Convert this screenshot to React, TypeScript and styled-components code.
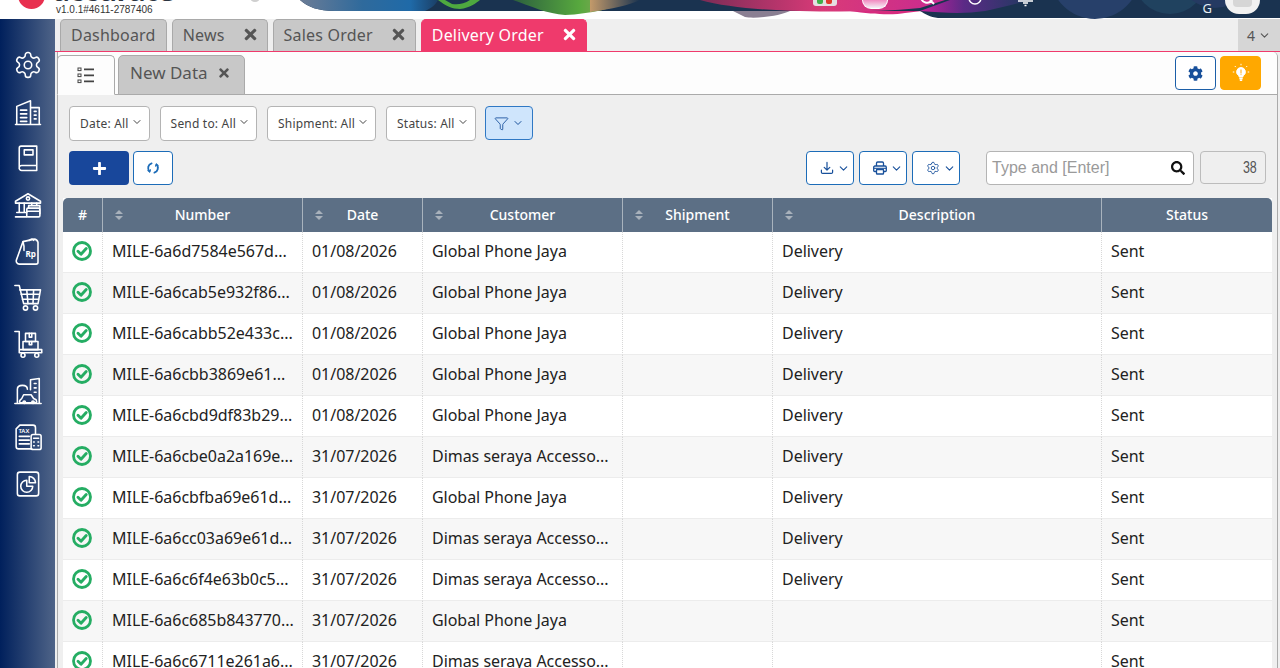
import styled, { createGlobalStyle } from "styled-components";
import { ChevronDown, Funnel, Settings } from "lucide-react";
import { FaCog, FaPlus, FaSearch, FaTimes } from "react-icons/fa";

const GlobalStyle = createGlobalStyle`
  html, body {
    margin: 0;
    height: 100%;
    overflow: hidden;
    background: #efefef;
    font-family: "Noto Sans", "Open Sans", sans-serif;
  }
  * { box-sizing: border-box; }
`;

const Page = styled.div`
  width: 1280px;
  height: 668px;
  overflow: hidden;
  display: flex;
  flex-direction: column;
`;

/* header, only the lower edge of it is on screen */
const Header = styled.header`
  position: relative;
  height: 19px;
  flex: none;
  background: #fff;
  overflow: hidden;
  display: flex;
  align-items: flex-end;
  justify-content: space-between;
`;
const BannerArt = styled.svg`
  position: absolute;
  left: 0;
  top: 0;
`;
const Brand = styled.div`
  position: relative;
  display: flex;
  align-items: flex-end;
  height: 19px;
  padding: 0 0 3px 18px;
`;
const LogoDot = styled.div`
  width: 27px;
  height: 27px;
  border-radius: 50%;
  background: #e8304f;
  flex: none;
  margin: 0 11px 7px 0;
`;
const BrandText = styled.div`
  display: flex;
  flex-direction: column;
`;
const BrandName = styled.div`
  display: flex;
  align-items: flex-end;
  gap: 7px;
  height: 20px;
  margin: 0 0 4px -3px;
`;
const BrandNameText = styled.span`
  font-size: 28px;
  font-weight: 700;
  color: #2b3440;
  line-height: 20px;
`;
const OnlineText = styled.span`
  font-size: 9px;
  font-style: italic;
  color: #666;
  line-height: 8px;
`;
const Version = styled.div`
  font-family: "Liberation Sans", sans-serif;
  font-size: 10px;
  line-height: 12px;
  color: #333;
`;
const StatusDot = styled.div`
  position: absolute;
  left: 250px;
  top: -7px;
  width: 10px;
  height: 9px;
  border-radius: 50%;
  background: #cfcfcf;
`;
const HeaderTools = styled.div`
  position: relative;
  height: 19px;
  display: flex;
  align-items: flex-start;
  padding-right: 20px;
`;
const AppsTile = styled.div`
  width: 24px;
  height: 6px;
  margin-right: 25px;
  border-radius: 0 0 3px 3px;
  background: #e5dfe2;
  display: flex;
  justify-content: center;
  gap: 3px;
`;
const AppsDot = styled.span<{ $c: string }>`
  width: 6px;
  height: 4px;
  border-radius: 0 0 2px 2px;
  background: ${(p) => p.$c};
`;
const Avatar = styled.div`
  width: 26px;
  height: 9px;
  margin-right: 27px;
  border-radius: 0 0 13px 13px;
  background: linear-gradient(#f28ac0, #f4f0f6);
  border: 1.5px solid #fff;
  border-top: none;
`;
const HeadIcons = styled.svg`
  flex: none;
  margin-right: 168px;
`;
const UserLetter = styled.div`
  color: #e8eef5;
  font-size: 13px;
  line-height: 14px;
  margin-right: 13px;
  padding-top: 1px;
`;
const UserBubble = styled.div`
  width: 35px;
  height: 14px;
  border-radius: 0 0 18px 18px;
  background: #f1f1f1;
  display: flex;
  justify-content: center;
`;
const UserBubbleInner = styled.span`
  width: 19px;
  height: 7px;
  background: #d6d6d6;
  border-radius: 0 0 4px 4px;
`;

const Body = styled.div`
  flex: 1;
  min-height: 0;
  display: flex;
`;

const Sidebar = styled.nav`
  width: 55px;
  flex: none;
  background: linear-gradient(90deg, #00205c 0%, #4f6488 100%);
  display: flex;
  flex-direction: column;
  align-items: center;
  padding: 31px 0 0 0;
  gap: 16.5px;
`;
const SideIcon = styled.svg`
  width: 30px;
  height: 30px;
  flex: none;
  fill: none;
  stroke: #fff;
  stroke-width: 1.25;
  stroke-linejoin: round;
  stroke-linecap: round;
`;

const Main = styled.main`
  flex: 1;
  min-width: 0;
  display: flex;
  flex-direction: column;
`;

const TabBar = styled.div`
  height: 33px;
  flex: none;
  display: flex;
  align-items: flex-end;
  gap: 5px;
  padding-left: 5px;
  background: #efefef;
  border-bottom: 1px solid #ef3a6c;
`;
const Tab = styled.div<{ $active?: boolean }>`
  height: 32px;
  display: flex;
  align-items: center;
  gap: 19px;
  padding: 0 10px 2px 10px;
  border: 1px solid ${(p) => (p.$active ? "#ef3a6c" : "#a9a9a9")};
  border-bottom: none;
  border-radius: 5px 5px 0 0;
  background: ${(p) => (p.$active ? "#ef3a6c" : "#c8c8c8")};
  color: ${(p) => (p.$active ? "#fff" : "#555")};
  font-size: 16px;
  letter-spacing: 0.2px;
  white-space: nowrap;
`;
const TabClose = styled(FaTimes)`
  font-size: 17px;
  margin: 0 -2px;
  flex: none;
`;
const TabMore = styled.div`
  margin-left: auto;
  width: 42px;
  height: 32px;
  background: #d6d6d6;
  color: #555;
  font-size: 14px;
  display: flex;
  align-items: center;
  justify-content: center;
  gap: 3px;
`;

const Panel = styled.section`
  flex: 1;
  min-height: 0;
  margin: 0 2px 0 2px;
  border-left: 1px solid #aaa;
  border-right: 1px solid #aaa;
  background: #efefef;
  border-top-right-radius: 5px;
`;
const SubBar = styled.div`
  height: 43px;
  display: flex;
  align-items: flex-end;
  gap: 3px;
  background: #fdfdfd;
  border-bottom: 1px solid #aaa;
  padding-right: 16px;
  border-top-right-radius: 5px;
`;
const SubTab = styled.div<{ $active?: boolean }>`
  height: 40px;
  margin-bottom: -1px;
  margin-left: ${(p) => (p.$active ? "-1px" : "0")};
  display: flex;
  align-items: center;
  justify-content: center;
  gap: 9px;
  padding: ${(p) => (p.$active ? "0" : "0 13px 5px 11px")};
  width: ${(p) => (p.$active ? "58px" : "auto")};
  border: 1px solid #aaa;
  border-bottom: ${(p) => (p.$active ? "1px solid #fdfdfd" : "1px solid #aaa")};
  border-radius: 5px 5px 0 0;
  background: ${(p) => (p.$active ? "#fdfdfd" : "#c8c8c8")};
  color: #555;
  font-size: 17px;
  white-space: nowrap;
`;
const SubActions = styled.div`
  margin-left: auto;
  align-self: flex-start;
  padding-top: 4px;
  display: flex;
  gap: 4px;
`;
const ActionButton = styled.button<{ $amber?: boolean }>`
  width: 41px;
  height: 34px;
  padding: 0;
  display: flex;
  align-items: center;
  justify-content: center;
  border-radius: 4px;
  border: 1px solid ${(p) => (p.$amber ? "#ffa800" : "#1c5fa8")};
  background: ${(p) => (p.$amber ? "#ffa800" : "#fff")};
  color: ${(p) => (p.$amber ? "#fff" : "#18509b")};
  font-size: 15px;
`;

const Content = styled.div`
  padding: 11px 5px 0 5px;
`;
const FilterRow = styled.div`
  display: flex;
  align-items: flex-start;
  gap: 10px;
  margin: 0 0 10px 6px;
`;
const FilterButton = styled.button`
  height: 35px;
  padding: 0 6px 0 10px;
  display: flex;
  align-items: center;
  gap: 2px;
  background: #fff;
  border: 1px solid #b4b4b4;
  border-radius: 4px;
  color: #444;
  font: 12px "Noto Sans", sans-serif;
  letter-spacing: 0.2px;
  white-space: nowrap;
`;
const FilterChevron = styled(ChevronDown)`
  margin-top: -3px;
`;
const FunnelButton = styled.button`
  width: 48px;
  height: 34px;
  padding: 0;
  margin-left: -1px;
  display: flex;
  align-items: center;
  justify-content: center;
  gap: 3px;
  background: #cfe5fc;
  border: 1px solid #2f78c4;
  border-radius: 4px;
  color: #18509b;
`;
const ToolRow = styled.div`
  display: flex;
  align-items: flex-start;
  margin: 0 6px 13px 6px;
`;
const AddButton = styled.button`
  width: 60px;
  height: 34px;
  padding: 0;
  display: flex;
  align-items: center;
  justify-content: center;
  background: #18479b;
  border: none;
  border-radius: 4px;
  color: #fff;
  font-size: 15px;
`;
const RefreshButton = styled.button`
  width: 40px;
  height: 34px;
  padding: 0;
  margin-left: 4px;
  display: flex;
  align-items: center;
  justify-content: center;
  background: #fff;
  border: 1px solid #1c6cb8;
  border-radius: 4px;
`;
const ToolGroup = styled.div`
  margin-left: auto;
  display: flex;
  gap: 5px;
`;
const ToolButton = styled.button`
  width: 48px;
  height: 34px;
  padding: 0 0 0 13px;
  display: flex;
  align-items: center;
  justify-content: flex-start;
  gap: 3px;
  background: #fff;
  border: 1px solid #1c6cb8;
  border-radius: 4px;
  color: #18509b;
`;
const SearchBox = styled.div`
  width: 208px;
  height: 34px;
  margin-left: 26px;
  padding: 0 8px 0 5px;
  display: flex;
  align-items: center;
  justify-content: space-between;
  background: #fff;
  border: 1px solid #b4b4b4;
  border-radius: 4px;
  color: #111;
  font-size: 14px;
`;
const SearchHint = styled.span`
  font: 16px "Liberation Sans", sans-serif;
  color: #9a9a9a;
`;
const CountBox = styled.div`
  width: 66px;
  height: 33px;
  margin-left: 6px;
  padding-right: 8px;
  display: flex;
  align-items: center;
  justify-content: flex-end;
  background: #efefef;
  border: 1px solid #bcbcbc;
  border-radius: 4px;
  color: #555;
  font: 16px "Liberation Sans", sans-serif;
`;
const CountValue = styled.span`
  display: inline-block;
  transform: scaleX(0.78);
  transform-origin: right center;
`;

const Table = styled.table`
  width: 1209px;
  table-layout: fixed;
  border-collapse: separate;
  border-spacing: 0;
  background: #fff;
`;
const HeadCell = styled.th`
  position: relative;
  height: 34px;
  padding: 0 0 2px 0;
  background: #5c6f85;
  color: #fff;
  font-size: 14px;
  font-weight: 500;
  text-align: center;
  border-right: 1px solid #a9b3bd;
  &:first-child { border-top-left-radius: 5px; }
  &:last-child { border-top-right-radius: 5px; border-right: none; }
`;
const SortMark = styled.svg`
  position: absolute;
  left: 11px;
  top: 11px;
`;
const Row = styled.tr<{ $even: boolean }>`
  background: ${(p) => (p.$even ? "#f7f7f7" : "#fff")};
`;
const Cell = styled.td`
  height: 41px;
  padding: 0 0 2px 9px;
  font-size: 16px;
  letter-spacing: -0.03px;
  color: #222;
  white-space: nowrap;
  overflow: hidden;
  border-right: 1px dotted #d8d8d8;
  border-bottom: 1px solid #ececec;
  &:last-child { border-right: none; }
`;
const CheckCell = styled(Cell)`
  padding: 0 2px 2px 0;
  text-align: center;
  line-height: 0;
`;

const cols = [
  { w: 40, title: "#", sort: false },
  { w: 200, title: "Number", sort: true },
  { w: 120, title: "Date", sort: true },
  { w: 200, title: "Customer", sort: true },
  { w: 150, title: "Shipment", sort: true },
  { w: 329, title: "Description", sort: true },
  { w: 170, title: "Status", sort: false },
];

const GP = "Global Phone Jaya";
const DS = "Dimas seraya Accesso...";
const rows = [
  ["MILE-6a6d7584e567d...", "01/08/2026", GP, "Delivery"],
  ["MILE-6a6cab5e932f86...", "01/08/2026", GP, "Delivery"],
  ["MILE-6a6cabb52e433c...", "01/08/2026", GP, "Delivery"],
  ["MILE-6a6cbb3869e61...", "01/08/2026", GP, "Delivery"],
  ["MILE-6a6cbd9df83b29...", "01/08/2026", GP, "Delivery"],
  ["MILE-6a6cbe0a2a169e...", "31/07/2026", DS, "Delivery"],
  ["MILE-6a6cbfba69e61d...", "31/07/2026", GP, "Delivery"],
  ["MILE-6a6cc03a69e61d...", "31/07/2026", DS, "Delivery"],
  ["MILE-6a6c6f4e63b0c5...", "31/07/2026", DS, "Delivery"],
  ["MILE-6a6c685b843770...", "31/07/2026", GP, ""],
  ["MILE-6a6c6711e261a6...", "31/07/2026", DS, ""],
];

function Banner() {
  return (
    <BannerArt width="1280" height="19" viewBox="0 0 1280 19">
      <defs>
        <linearGradient id="left" x1="0" x2="1" y1="0" y2="0">
          <stop offset="0" stopColor="#6b7c96" />
          <stop offset="0.45" stopColor="#2f6a9c" />
          <stop offset="0.8" stopColor="#1f6aa8" />
          <stop offset="1" stopColor="#1b3f66" />
        </linearGradient>
        <linearGradient id="green" x1="0" x2="1" y1="0" y2="0">
          <stop offset="0" stopColor="#2c5f3e" />
          <stop offset="0.55" stopColor="#57a83e" />
          <stop offset="0.8" stopColor="#8aa85a" />
          <stop offset="1" stopColor="#c39a6a" />
        </linearGradient>
        <linearGradient id="tan" x1="0" x2="1" y1="0" y2="0">
          <stop offset="0" stopColor="#c39a6a" />
          <stop offset="1" stopColor="#1a3350" />
        </linearGradient>
        <linearGradient id="pink" x1="0" x2="1" y1="0" y2="0">
          <stop offset="0" stopColor="#7a2c55" />
          <stop offset="0.5" stopColor="#d93a78" />
          <stop offset="1" stopColor="#c92a90" />
        </linearGradient>
        <linearGradient id="violet" x1="0" x2="1" y1="0" y2="0">
          <stop offset="0" stopColor="#c81f9c" />
          <stop offset="0.4" stopColor="#5b2a86" />
          <stop offset="1" stopColor="#1f3a5f" />
        </linearGradient>
        <linearGradient id="tail" x1="0" x2="1" y1="0" y2="0">
          <stop offset="0" stopColor="#ef3a6c" stopOpacity="0" />
          <stop offset="0.15" stopColor="#ef3a6c" stopOpacity="0.7" />
          <stop offset="1" stopColor="#ef3a6c" />
        </linearGradient>
      </defs>
      <path d="M300 0C308 7 318 11 335 11L920 11C925 14 930 17 938 18L1280 18L1280 0Z" fill="#1a3350" />
      <path d="M300 0C308 7 318 11 335 11L425 11C432 8 436 4 438 0Z" fill="url(#left)" />
      <path d="M438 0C446 6 452 9 460 9C470 8 476 3 480 0L470 0C464 4 458 5 452 4L445 0Z" fill="#4ea83f" />
      <path d="M513 0C530 6 548 14 565 15C590 14 615 8 633 0Z" fill="url(#green)" />
      <path d="M590 0L640 0C630 5 612 9 590 12Z" fill="url(#tan)" />
      <path d="M700 0C725 7 760 10 800 11C840 12 880 12 920 8L945 0Z" fill="url(#pink)" />
      <path d="M733 11H790C780 16 755 19 745 17Z" fill="#8a7f92" />
      <path d="M850 11C875 15 895 15 905 13L922 11Z" fill="#d62b7e" />
      <path d="M920 11C945 13 965 14 985 11C1000 8 1020 3 1030 0L950 0Z" fill="url(#violet)" />
      <circle cx="1095" cy="-26" r="45" fill="#27406a" />
      <circle cx="1170" cy="-22" r="36" fill="#20425f" />
      <circle cx="1215" cy="-30" r="38" fill="#253a62" />
      <path d="M130 15.5H925" stroke="url(#tail)" strokeWidth="1" />
    </BannerArt>
  );
}

function SortIcon() {
  return (
    <SortMark width="10" height="12" viewBox="0 0 10 12">
      <path d="M5 1L9 5H1Z M1 7H9L5 11Z" fill="#a8b1bb" />
    </SortMark>
  );
}

function CheckMark() {
  return (
    <svg width="20" height="20" viewBox="0 0 20 20" fill="none">
      <circle cx="10" cy="10" r="8.500" stroke="#25ad63" strokeWidth="2.800" />
      <path d="M6 10.300L9 13.200L14.200 7.600" stroke="#25ad63" strokeWidth="2.900" strokeLinecap="round" strokeLinejoin="round" />
    </svg>
  );
}

function ListIcon() {
  return (
    <svg width="18" height="18" viewBox="0 0 18 18" fill="none" stroke="#444">
      <rect x="1" y="2" width="3" height="2.600" strokeWidth="1" />
      <rect x="1" y="8" width="3" height="2.600" strokeWidth="1" />
      <rect x="1" y="14" width="3" height="2.600" strokeWidth="1" />
      <path d="M7 3.300H17M7 9.300H17M7 15.300H17" strokeWidth="1.800" />
    </svg>
  );
}

function BulbIcon() {
  return (
    <svg width="20" height="20" viewBox="0 0 20 20" fill="none" stroke="#fff" strokeWidth="1">
      <path d="M10 4.500a4.400 4.400 0 0 0-2.500 8c.5.400.6 1 .6 1.500h3.800c0-.5.1-1.100.6-1.500a4.400 4.400 0 0 0-2.500-8Z" fill="#fff" />
      <path d="M8.300 15.500h3.400M8.800 17.300h2.400" strokeWidth="1.400" />
      <path d="M10 6.500v4M10 11.300v.8" stroke="#ffa800" />
      <path d="M10 .8v1.500M3.800 3l1 1.100M16.200 3l-1 1.100M1.800 9h1.500M16.700 9h1.500" />
    </svg>
  );
}

function DownloadIcon() {
  return (
    <svg width="14" height="14" viewBox="0 0 15 15" fill="none" stroke="#18509b" strokeWidth="1.300" strokeLinecap="round" strokeLinejoin="round">
      <path d="M7.500 1.500v8M4.500 6.800l3 3 3-3" />
      <path d="M1.500 9.800v2.200a1.300 1.300 0 0 0 1.300 1.300h9.400a1.300 1.300 0 0 0 1.300-1.300V9.800" />
    </svg>
  );
}

function PrinterIcon() {
  return (
    <svg width="14" height="14" viewBox="0 0 14 14" fill="none" stroke="#18509b" strokeWidth="1.300" strokeLinejoin="round">
      <path d="M3.500 5V2.200A1.200 1.200 0 0 1 4.700 1h4.600a1.200 1.200 0 0 1 1.200 1.200V5" />
      <path d="M3 10.500H1.700A1 1 0 0 1 .7 9.500V6.200A1.200 1.200 0 0 1 1.900 5h10.200a1.200 1.200 0 0 1 1.200 1.200v3.300a1 1 0 0 1-1 1H11" />
      <rect x="3.500" y="8.500" width="7" height="4.500" rx=".6" />
      <path d="M1 7.300h12" strokeWidth="1.100" />
    </svg>
  );
}

function RefreshIcon() {
  return (
    <svg width="14" height="14" viewBox="0 0 14 14" fill="none" stroke="#1c6cb8" strokeWidth="1.800" strokeLinecap="round">
      <path d="M5.600 2.300A5 5 0 0 0 3.500 10.500" />
      <path d="M8.400 11.700A5 5 0 0 0 10.500 3.500" />
      <path d="M2 9.500l1.600 1.200.8-1.800M12 4.500l-1.600-1.200-.8 1.800" strokeWidth="1.300" />
    </svg>
  );
}

function App() {
  return (
    <Page>
      <GlobalStyle />
      <Header>
        <Banner />
        <Brand>
          <LogoDot />
          <BrandText>
            <BrandName>
              <BrandNameText>accurate</BrandNameText>
              <OnlineText>online</OnlineText>
            </BrandName>
            <Version>v1.0.1#4611-2787406</Version>
          </BrandText>
          <StatusDot />
        </Brand>
        <HeaderTools>
          <AppsTile>
            <AppsDot $c="#3fae49" />
            <AppsDot $c="#e0392b" />
          </AppsTile>
          <Avatar />
          <HeadIcons width="120" height="10" viewBox="0 0 120 10" fill="none" stroke="#fff" strokeWidth="2">
            <path d="M6 -3a6 6 0 0 0 11 3M15 0l4 4" />
            <circle cx="60" cy="-2" r="6" strokeWidth="1.500" />
            <path d="M103 1H118M108 3h5M109.500 5.500h2" strokeWidth="1.400" />
          </HeadIcons>
          <UserLetter>G</UserLetter>
          <UserBubble>
            <UserBubbleInner />
          </UserBubble>
        </HeaderTools>
      </Header>
      <Body>
        <Sidebar>
          <SideIcon viewBox="0 0 24 24">
            <path d="M12.200 2h-.4a2 2 0 0 0-2 2v.2a2 2 0 0 1-1 1.700l-.4.300a2 2 0 0 1-2 0l-.2-.1a2 2 0 0 0-2.700.7l-.2.400a2 2 0 0 0 .7 2.700l.2.100a2 2 0 0 1 1 1.700v.5a2 2 0 0 1-1 1.700l-.2.100a2 2 0 0 0-.7 2.700l.2.400a2 2 0 0 0 2.700.7l.2-.1a2 2 0 0 1 2 0l.4.300a2 2 0 0 1 1 1.700v.2a2 2 0 0 0 2 2h.4a2 2 0 0 0 2-2v-.2a2 2 0 0 1 1-1.700l.4-.3a2 2 0 0 1 2 0l.2.100a2 2 0 0 0 2.700-.7l.2-.4a2 2 0 0 0-.7-2.700l-.2-.1a2 2 0 0 1-1-1.700v-.5a2 2 0 0 1 1-1.700l.2-.1a2 2 0 0 0 .7-2.700l-.2-.4a2 2 0 0 0-2.700-.7l-.2.100a2 2 0 0 1-2 0l-.4-.3a2 2 0 0 1-1-1.700V4a2 2 0 0 0-2-2Z" />
            <circle cx="12" cy="12" r="3" />
          </SideIcon>
          <SideIcon viewBox="0 0 24 24">
            <path d="M2 22h20M3 22V7.500L14 3v19M14 8.500h7V22" />
            <path d="M6 10.500h5M6 13.500h5M6 16.500h5M6 19.500h5M17 11.500h1.500M17 14.500h1.500M17 17.500h1.500" />
          </SideIcon>
          <SideIcon viewBox="0 0 24 24">
            <path d="M5 19.500V4a1.500 1.500 0 0 1 1.500-1.500H19V22H7a2 2 0 0 1-2-2.500Zm0 0A2 2 0 0 1 7 18h12" />
            <rect x="9" y="5.500" width="7" height="4" />
          </SideIcon>
          <SideIcon viewBox="0 0 24 24">
            <path d="M2 9L12 3l10 6v1.500H2Z" />
            <circle cx="12" cy="6.800" r="1.300" />
            <path d="M5 10.500V18M9 10.500V18M15 10.500v1.500M19 10.500v1.500M3 18h8M2 21.500h9" />
            <rect x="11" y="14.500" width="10.500" height="7" rx="1" />
            <path d="M12.500 14.500V12.500h9v6.500M11 17h10.500" />
          </SideIcon>
          <SideIcon viewBox="0 0 24 24">
            <path d="M8 4.500L17 2.500c1.500 0 2.500 1 3 2.500V21a1.500 1.500 0 0 1-1.500 1.500H5a2.500 2.500 0 0 1-2.300-3.200L8 4.500Z" />
            <path d="M8 4.500c.8 2.500 1.200 4.500.8 7M13 3.500c1.500-1.500 3-1.500 3.500 0" />
            <text x="10" y="16.500" fontSize="6.500" fontWeight="700" fill="#fff" stroke="none" fontFamily="Noto Sans">Rp</text>
          </SideIcon>
          <SideIcon viewBox="0 0 24 24">
            <path d="M1.500 2h3.500l3.500 14.500h11" />
            <path d="M5.500 5.500H22l-2 11" />
            <path d="M6.500 9h14.500M7.500 13h13M11 5.500l1 11M16.500 5.500l-.5 11" />
            <circle cx="10" cy="20" r="1.700" />
            <circle cx="18" cy="20" r="1.700" />
          </SideIcon>
          <SideIcon viewBox="0 0 24 24">
            <path d="M1.500 2h3.500v14.500h18v2.500H5v-2.500" />
            <circle cx="8" cy="21" r="1.600" />
            <circle cx="19" cy="21" r="1.600" />
            <rect x="8" y="10" width="12" height="6.500" />
            <rect x="10" y="3.500" width="8" height="6.500" />
            <path d="M13 3.500v3h2v-3M13 10v2.500h2V10" />
          </SideIcon>
          <SideIcon viewBox="0 0 24 24">
            <path d="M1.500 22h21M3.500 22V10.500c0-2 1.500-3 4-3s4 1 4 3M14 11V3l7-1v20" />
            <path d="M17 6h1.500M17 9.500h1.500M17 13h1.500" />
            <path d="M5.500 19.500l1.500-1.500 1.500-3h6l2 3 2 1c.5 1 .5 2 0 2.500H6c-.8-.5-.8-1.500-.5-2Z" />
            <circle cx="9" cy="21" r="1" />
            <circle cx="16" cy="21" r="1" />
          </SideIcon>
          <SideIcon viewBox="0 0 24 24">
            <path d="M15 21.500H4.500a2 2 0 0 1-2-2V5.500l3-3H16a2 2 0 0 1 2 2v5" />
            <text x="4.300" y="8.600" fontSize="4.800" fontWeight="600" fill="#fff" stroke="none" fontFamily="Noto Sans">TAX</text>
            <path d="M5 11.500h8M5 14.500h8M5 17.500h8" />
            <rect x="14.500" y="10" width="8" height="12" rx="1.500" />
            <path d="M16.500 13h4M16.500 16h.5M20 16h.5M16.500 19h.5M20 19h.5" />
          </SideIcon>
          <SideIcon viewBox="0 0 24 24" strokeWidth="1.500">
            <rect x="3.500" y="2.500" width="17" height="19" rx="2" />
            <path d="M11 9a4.800 4.800 0 1 0 4.800 4.800H11Z" />
            <path d="M13 6a5 5 0 0 1 5 5h-5Z" />
          </SideIcon>
        </Sidebar>
        <Main>
          <TabBar>
            <Tab>Dashboard</Tab>
            <Tab>
              News
              <TabClose />
            </Tab>
            <Tab>
              Sales Order
              <TabClose />
            </Tab>
            <Tab $active>
              Delivery Order
              <TabClose />
            </Tab>
            <TabMore>
              4
              <ChevronDown size={13} />
            </TabMore>
          </TabBar>
          <Panel>
            <SubBar>
              <SubTab $active>
                <ListIcon />
              </SubTab>
              <SubTab>
                New Data
                <FaTimes size={14} />
              </SubTab>
              <SubActions>
                <ActionButton>
                  <FaCog />
                </ActionButton>
                <ActionButton $amber>
                  <BulbIcon />
                </ActionButton>
              </SubActions>
            </SubBar>
            <Content>
              <FilterRow>
                <FilterButton>
                  Date: All
                  <FilterChevron size={12} />
                </FilterButton>
                <FilterButton>
                  Send to: All
                  <FilterChevron size={12} />
                </FilterButton>
                <FilterButton>
                  Shipment: All
                  <FilterChevron size={12} />
                </FilterButton>
                <FilterButton>
                  Status: All
                  <FilterChevron size={12} />
                </FilterButton>
                <FunnelButton>
                  <Funnel size={15} strokeWidth={1.400} />
                  <ChevronDown size={12} />
                </FunnelButton>
              </FilterRow>
              <ToolRow>
                <AddButton>
                  <FaPlus />
                </AddButton>
                <RefreshButton>
                  <RefreshIcon />
                </RefreshButton>
                <ToolGroup>
                  <ToolButton>
                    <DownloadIcon />
                    <ChevronDown size={13} />
                  </ToolButton>
                  <ToolButton>
                    <PrinterIcon />
                    <ChevronDown size={13} />
                  </ToolButton>
                  <ToolButton>
                    <Settings size={14} strokeWidth={1.500} />
                    <ChevronDown size={13} />
                  </ToolButton>
                </ToolGroup>
                <SearchBox>
                  <SearchHint>Type and [Enter]</SearchHint>
                  <FaSearch />
                </SearchBox>
                <CountBox>
                  <CountValue>38</CountValue>
                </CountBox>
              </ToolRow>
              <Table>
                <colgroup>
                  {cols.map((c) => (
                    <col key={c.title} width={c.w} />
                  ))}
                </colgroup>
                <thead>
                  <tr>
                    {cols.map((c) => (
                      <HeadCell key={c.title}>
                        {c.sort && <SortIcon />}
                        {c.title}
                      </HeadCell>
                    ))}
                  </tr>
                </thead>
                <tbody>
                  {rows.map((r, i) => (
                    <Row key={r[0]} $even={i % 2 === 1}>
                      <CheckCell>
                        <CheckMark />
                      </CheckCell>
                      <Cell>{r[0]}</Cell>
                      <Cell>{r[1]}</Cell>
                      <Cell>{r[2]}</Cell>
                      <Cell />
                      <Cell>{r[3]}</Cell>
                      <Cell>Sent</Cell>
                    </Row>
                  ))}
                </tbody>
              </Table>
            </Content>
          </Panel>
        </Main>
      </Body>
    </Page>
  );
}

export default App;
